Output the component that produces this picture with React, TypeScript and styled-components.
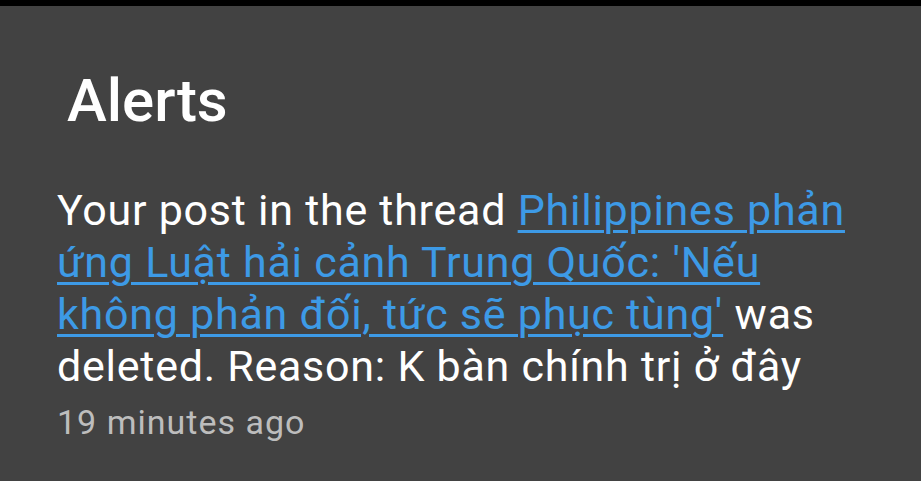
import styled, { createGlobalStyle } from 'styled-components';

const GlobalStyle = createGlobalStyle`
  html, body {
    margin: 0;
    padding: 0;
    background: #424242;
  }
  body {
    font-family: Roboto, "Noto Sans", sans-serif;
  }
`;

const Screen = styled.div`
  width: 921px;
  height: 481px;
  overflow: hidden;
  background: #424242;
  border-top: 6px solid #000;
  box-sizing: border-box;
`;

const Title = styled.h1`
  margin: 0;
  padding: 60px 0 0 67px;
  font-size: 60px;
  font-weight: 500;
  line-height: 70px;
  color: #ffffff;
`;

const Alert = styled.div`
  padding: 48px 40px 0 57px;
`;

const Message = styled.p`
  margin: 0;
  font-size: 43px;
  line-height: 52px;
  letter-spacing: 0.75px;
  color: #ffffff;
`;

const ThreadLink = styled.a`
  color: #3d9ae6;
  text-decoration: underline;
  text-decoration-thickness: 3px;
  text-underline-offset: 5px;
`;

const Time = styled.div`
  margin-top: 10px;
  font-size: 34px;
  line-height: 40px;
  letter-spacing: 1px;
  color: #bdbdbd;
`;

export default function App() {
  return (
    <Screen>
      <GlobalStyle />
      <Title>Alerts</Title>
      <Alert>
        <Message>
          Your post in the thread{' '}
          <ThreadLink href="#">
            Philippines phản ứng Luật hải cảnh Trung Quốc: 'Nếu không phản đối, tức sẽ phục tùng'
          </ThreadLink>{' '}
          was deleted. Reason: K bàn chính trị ở đây
        </Message>
        <Time>19 minutes ago</Time>
      </Alert>
    </Screen>
  );
}
